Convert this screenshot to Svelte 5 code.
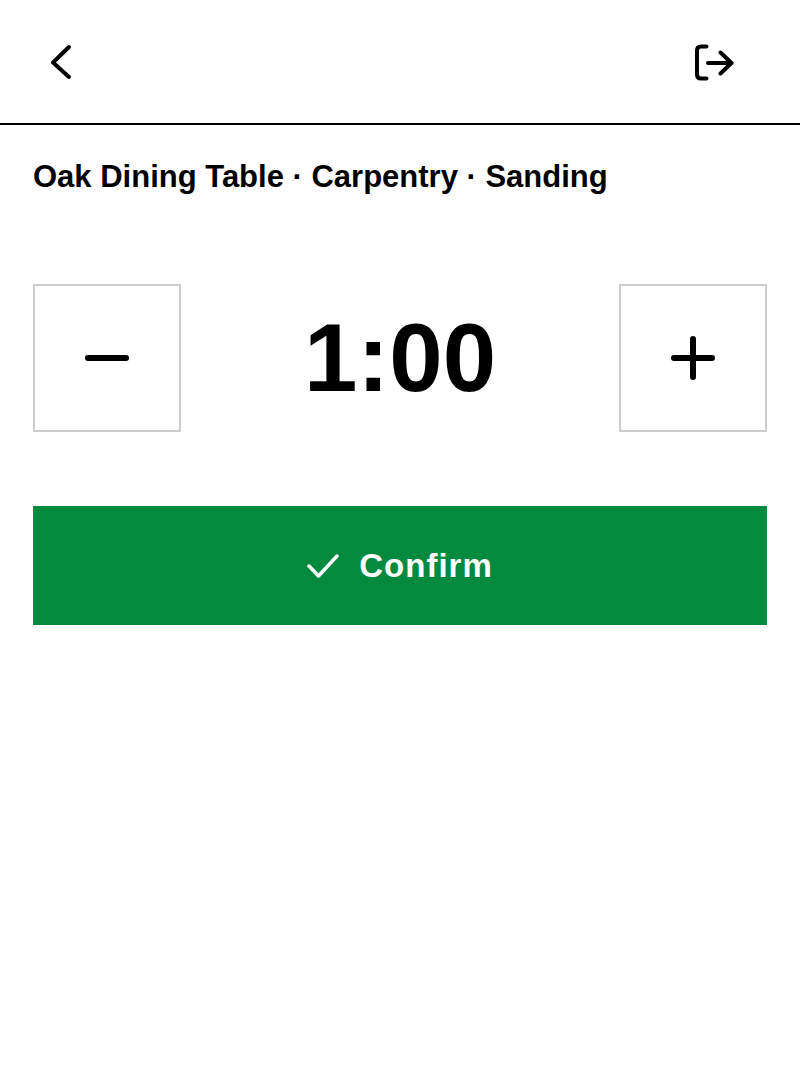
<script>
    let minutes = $state(60)
    const label = $derived(`${Math.floor(minutes / 60)}:${String(minutes % 60).padStart(2, '0')}`)
</script>

<div class="screen">
    <header class="top">
        <button class="icon back" aria-label="Back">
            <svg width="40" height="40" viewBox="0 0 40 40"><path d="M28 5 L12 20.5 L28 35"/></svg>
        </button>
        <button class="icon leave" aria-label="Log out">
            <svg width="40" height="40" viewBox="0 0 40 40"><path d="M12.5 4.5 H7 Q3 4.5 3 8.5 V32.5 Q3 36.500 7 36.500 H12.500"/><path d="M14 21 H37.500 M26.500 10.500 L37.500 21 L26.500 31.500"/></svg>
        </button>
    </header>

    <main class="body">
        <h1>Oak Dining Table · Carpentry · Sanding</h1>

        <div class="stepper">
            <button class="step" aria-label="Less" onclick={() => minutes -= 15}>
                <svg width="48" height="48" viewBox="0 0 48 48"><path d="M5 24 H43"/></svg>
            </button>
            <span class="time">{label}</span>
            <button class="step" aria-label="More" onclick={() => minutes += 15}>
                <svg width="48" height="48" viewBox="0 0 48 48"><path d="M5 24 H43 M24 5 V43"/></svg>
            </button>
        </div>

        <button class="confirm">
            <svg width="32" height="26" viewBox="0 0 32 26"><path d="M2 13 L11.500 23 L30 3"/></svg>
            <span>Confirm</span>
        </button>
    </main>
</div>

<style>
    :global(body) {
        background: #fff;
    }

    .screen {
        font-family: "Liberation Sans", Arial, sans-serif;
        color: #000;
        height: 1074px;
    }

    button {
        font-family: inherit;
        background: none;
        border: none;
        padding: 0;
        cursor: pointer;
        color: inherit;
    }

    svg {
        display: block;
        fill: none;
        stroke: currentColor;
        stroke-linecap: round;
        stroke-linejoin: round;
    }

    .top {
        display: flex;
        justify-content: space-between;
        align-items: center;
        height: 123px;
        padding: 0 66px 0 41px;
        border-bottom: 2px solid #000;
    }

    .icon svg {
        stroke-width: 4;
    }

    .body {
        padding: 0 33px;
    }

    h1 {
        font-size: 31px;
        font-weight: 700;
        line-height: 40px;
        margin: 0;
        padding-top: 32px;
    }

    .stepper {
        display: flex;
        justify-content: space-between;
        align-items: center;
        margin-top: 87px;
    }

    .step {
        width: 148px;
        height: 148px;
        border: 2px solid #ccc;
        display: flex;
        align-items: center;
        justify-content: center;
    }

    .step svg {
        stroke-width: 6;
    }

    .time {
        font-size: 96px;
        font-weight: 700;
        line-height: 1;
    }

    .confirm {
        display: flex;
        align-items: center;
        justify-content: center;
        gap: 20px;
        width: 100%;
        height: 119px;
        margin-top: 74px;
        background: #048a3f;
        color: #fff;
        font-size: 33px;
        font-weight: 700;
        letter-spacing: 1px;
    }

    .confirm svg {
        stroke-width: 3.5;
    }
</style>
